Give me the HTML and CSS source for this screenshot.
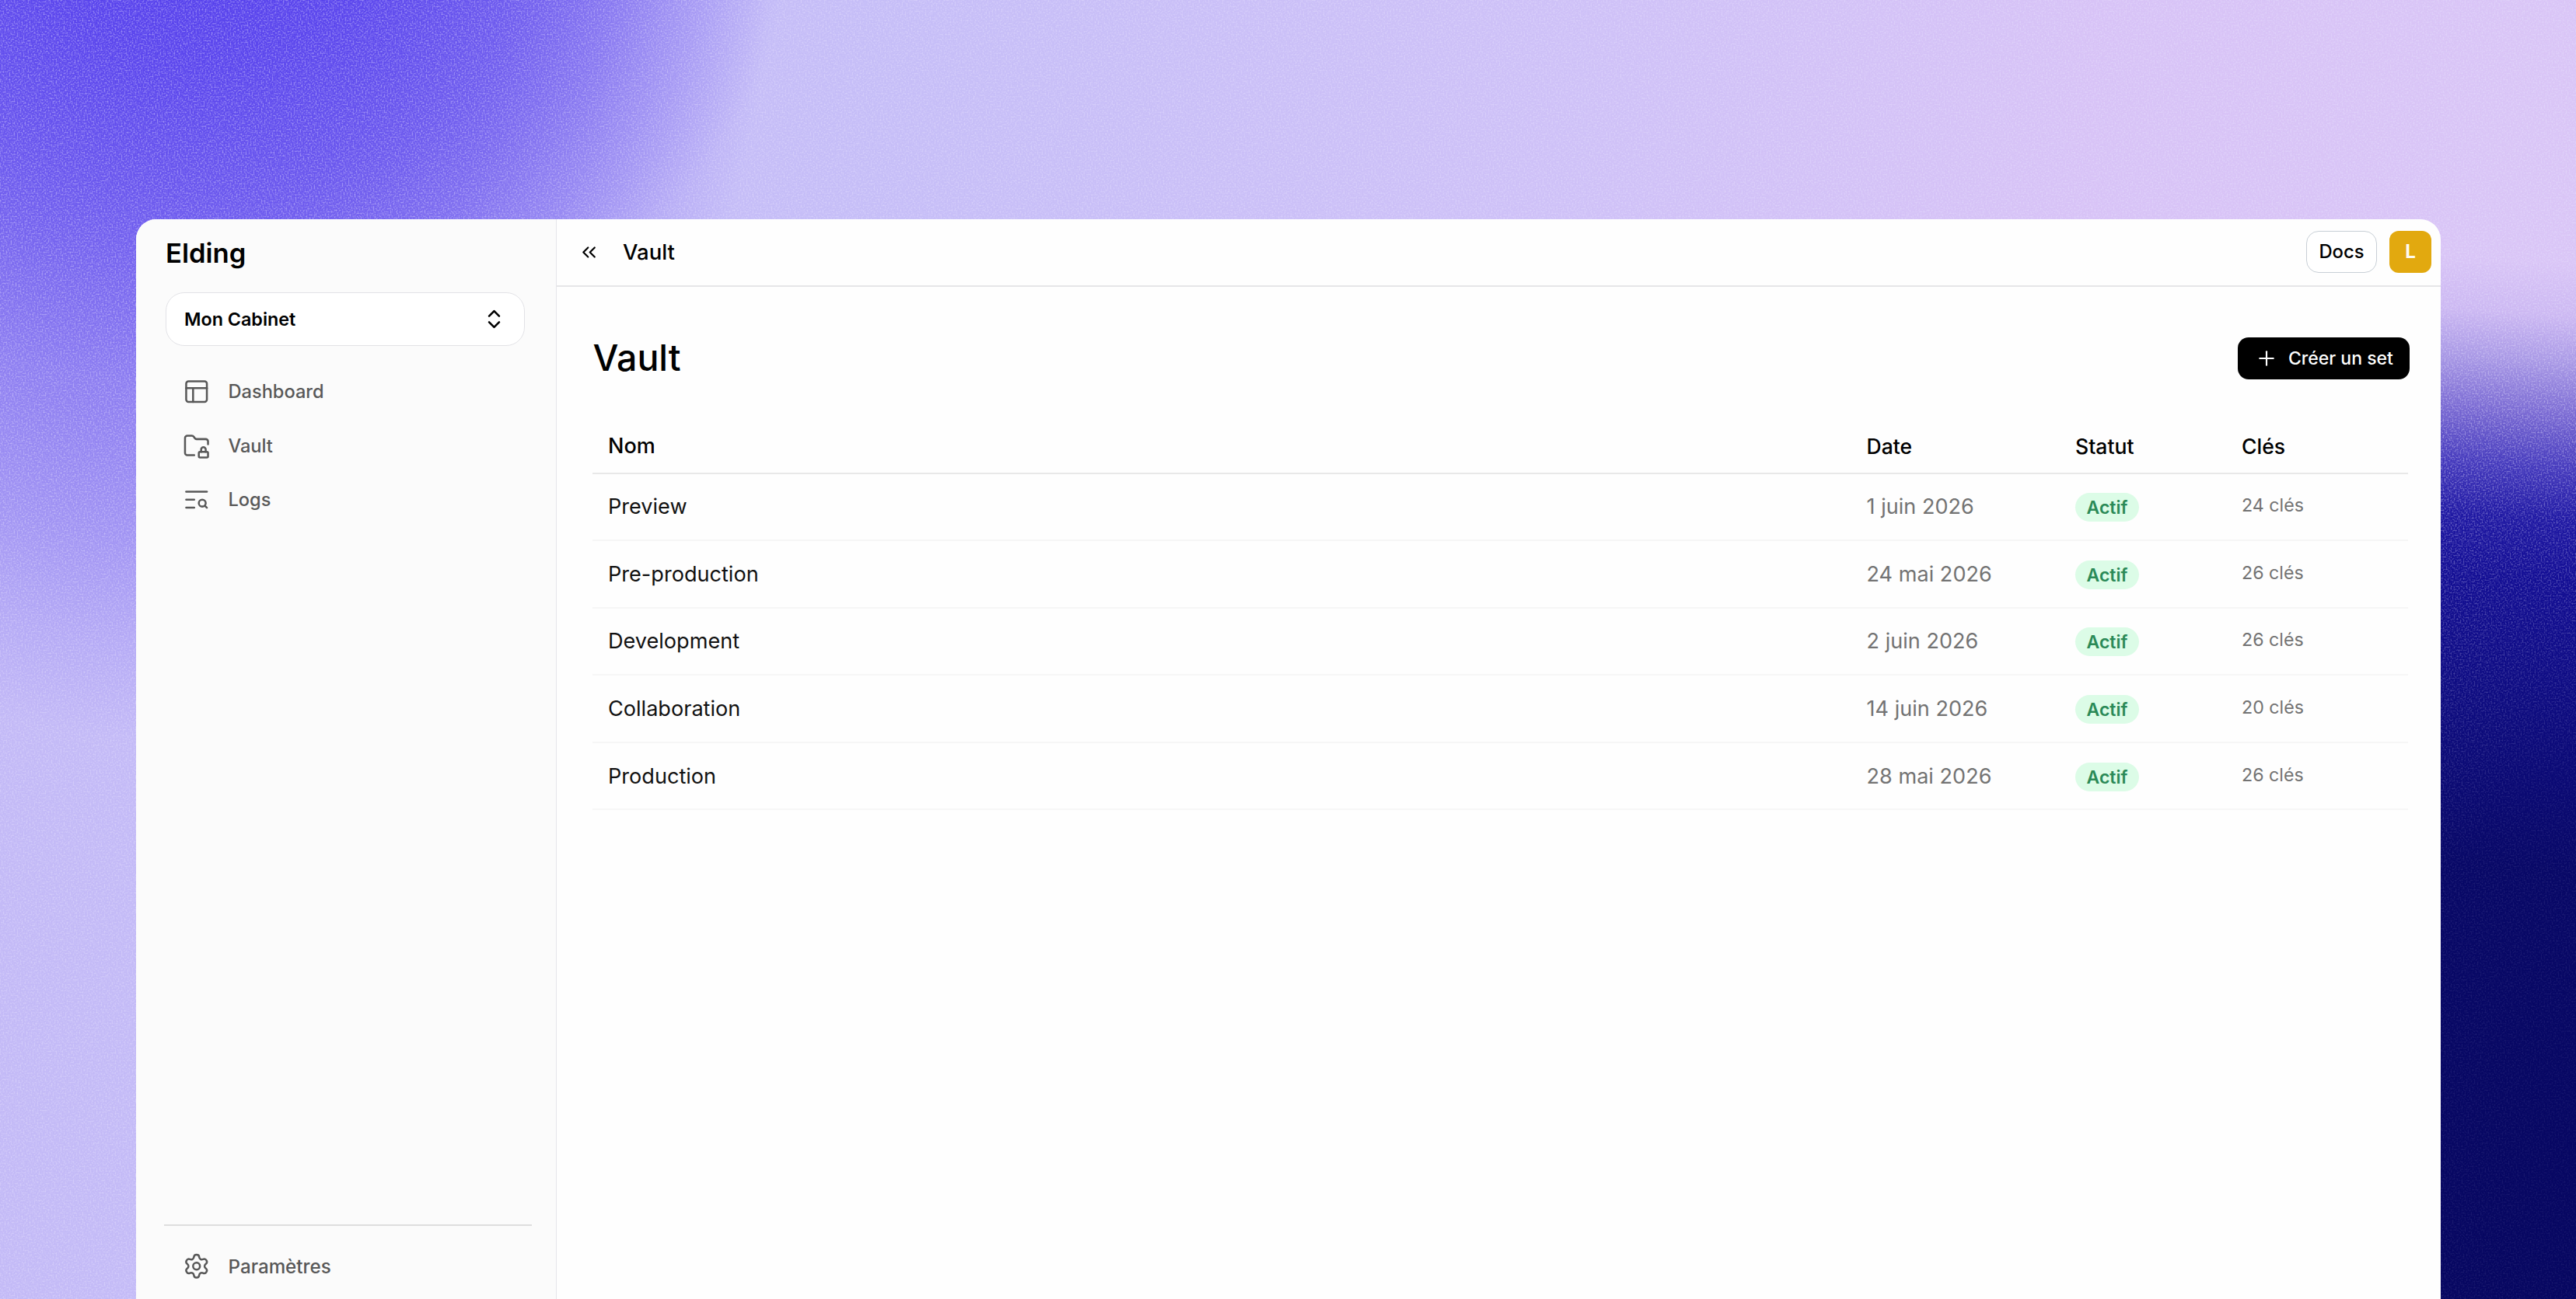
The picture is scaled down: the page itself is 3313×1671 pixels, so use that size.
FILE: index.html
```html
<!DOCTYPE html>
<html lang="fr">
<head>
<meta charset="utf-8">
<title>Elding – Vault</title>
<link rel="stylesheet" href="styles.css">
</head>
<body>
<svg class="grain" aria-hidden="true">
  <filter id="grain" x="0" y="0" width="100%" height="100%">
    <feTurbulence type="fractalNoise" baseFrequency="0.5" numOctaves="2" seed="4"/>
    <feColorMatrix values="0 0 0 0 0.82  0 0 0 0 0.78  0 0 0 0 1  2.8 0 0 0 -1.2"/>
  </filter>
  <rect width="100%" height="100%" filter="url(#grain)"/>
</svg>
<div class="window">
  <aside class="sidebar">
    <div class="brand">Elding</div>
    <button class="workspace">
      <span>Mon Cabinet</span>
      <svg class="icon icon-select" viewBox="0 0 24 24"><path d="m7 15 5 5 5-5"/><path d="m7 9 5-5 5 5"/></svg>
    </button>
    <nav class="nav">
      <a class="nav-item">
        <svg class="icon icon-nav" viewBox="0 0 24 24"><rect width="18" height="18" x="3" y="3" rx="2"/><path d="M3 9h18"/><path d="M9 21V9"/></svg>
        <span>Dashboard</span>
      </a>
      <a class="nav-item">
        <svg class="icon icon-nav" viewBox="0 0 24 24"><rect width="8" height="5" x="14" y="17" rx="1"/><path d="M10 20H4a2 2 0 0 1-2-2V5a2 2 0 0 1 2-2h3.9a2 2 0 0 1 1.69.9l.81 1.2a2 2 0 0 0 1.67.9H20a2 2 0 0 1 2 2v2.5"/><path d="M20 17v-2a2 2 0 1 0-4 0v2"/></svg>
        <span>Vault</span>
      </a>
      <a class="nav-item">
        <svg class="icon icon-nav" viewBox="0 0 24 24"><path d="M21 5H3"/><path d="M10 12H3"/><path d="M10 19H3"/><circle cx="17" cy="15" r="3"/><path d="m21 19-1.9-1.9"/></svg>
        <span>Logs</span>
      </a>
    </nav>
    <div class="sidebar-footer">
      <a class="nav-item">
        <svg class="icon icon-nav" viewBox="0 0 24 24"><path d="M9.671 4.136a2.34 2.34 0 0 1 4.659 0 2.34 2.34 0 0 0 3.319 1.915 2.34 2.34 0 0 1 2.33 4.033 2.34 2.34 0 0 0 0 3.831 2.34 2.34 0 0 1-2.33 4.033 2.34 2.34 0 0 0-3.319 1.915 2.34 2.34 0 0 1-4.659 0 2.34 2.34 0 0 0-3.32-1.915 2.34 2.34 0 0 1-2.33-4.033 2.34 2.34 0 0 0 0-3.831A2.34 2.34 0 0 1 6.35 6.051a2.34 2.34 0 0 0 3.319-1.915"/><circle cx="12" cy="12" r="3"/></svg>
        <span>Paramètres</span>
      </a>
    </div>
  </aside>
  <main class="main">
    <header class="topbar">
      <svg class="icon icon-collapse" viewBox="0 0 24 24"><path d="m11 17-5-5 5-5"/><path d="m18 17-5-5 5-5"/></svg>
      <span class="crumb">Vault</span>
      <button class="docs">Docs</button>
      <div class="avatar">L</div>
    </header>
    <section class="content">
      <div class="heading">
        <h1>Vault</h1>
        <button class="create">
          <svg class="icon icon-plus" viewBox="0 0 24 24"><path d="M5 12h14"/><path d="M12 5v14"/></svg>
          <span>Créer un set</span>
        </button>
      </div>
      <div class="table">
        <div class="row row-head"><span class="head-name">Nom</span><span>Date</span><span>Statut</span><span>Clés</span></div>
        <div class="row"><span class="name">Preview</span><span class="date">1 juin 2026</span><span class="badge">Actif</span><span class="keys">24 clés</span></div>
        <div class="row"><span class="name">Pre-production</span><span class="date">24 mai 2026</span><span class="badge">Actif</span><span class="keys">26 clés</span></div>
        <div class="row"><span class="name">Development</span><span class="date">2 juin 2026</span><span class="badge">Actif</span><span class="keys">26 clés</span></div>
        <div class="row"><span class="name">Collaboration</span><span class="date">14 juin 2026</span><span class="badge">Actif</span><span class="keys">20 clés</span></div>
        <div class="row"><span class="name">Production</span><span class="date">28 mai 2026</span><span class="badge">Actif</span><span class="keys">26 clés</span></div>
      </div>
    </section>
  </main>
</div>
</body>
</html>
```
FILE: styles.css
```css
* {
  box-sizing: border-box;
}

body {
  margin: 0;
  height: 1671px;
  padding: 282px 174px 0 175px;
  overflow: hidden;
  position: relative;
  font-family: Inter, "Liberation Sans", sans-serif;
  color: #000;
  background:
    radial-gradient(ellipse 760px 600px at 260px -100px, rgba(80, 58, 236, 0.95) 0%, rgba(80, 58, 236, 0.8) 30%, rgba(80, 58, 236, 0.5) 58%, rgba(80, 58, 236, 0.2) 80%, rgba(80, 58, 236, 0) 100%),
    radial-gradient(ellipse 800px 1010px at 190px -60px, #7e6df0 0%, #8373f0 40%, #8e7ff1 58%, #a093f3 74%, rgba(178, 167, 245, 0.85) 88%, rgba(198, 190, 247, 0) 100%),
    linear-gradient(184deg, rgba(218, 198, 246, 0) 20%, rgba(200, 180, 241, 0.8) 24%, #a898e5 27.5%, #7868d2 31.5%, #4338bc 35.5%, #1d16a2 39.5%, #110c93 44%, #0c0a7e 54%, #070766 66%, #060660 100%) right / 400px 100% no-repeat,
    linear-gradient(100deg, #c2b8f6 0%, #c5bdf7 32%, #cdc0f7 55%, #d7c2f6 75%, #dac6f6 100%);
}

button {
  font: inherit;
  color: inherit;
  margin: 0;
}

.grain {
  position: absolute;
  inset: 0;
  width: 100%;
  height: 100%;
  opacity: 0.42;
  mask-image: radial-gradient(ellipse 500px 1000px at 3313px 1500px, rgba(0, 0, 0, 0.15) 0%, rgba(0, 0, 0, 0.25) 50%, #000 95%);
}

.icon {
  flex: none;
  fill: none;
  stroke: currentColor;
  stroke-linecap: round;
  stroke-linejoin: round;
}

.window {
  position: relative;
  display: flex;
  height: 1389px;
  border-radius: 26px 26px 0 0;
  overflow: hidden;
  background: #fefefe;
}

/* Sidebar */

.sidebar {
  flex: none;
  width: 541px;
  display: flex;
  flex-direction: column;
  border-right: 1.5px solid #e6e6ea;
  background: #fbfbfb;
}

.brand {
  height: 94px;
  padding: 0 0 7px 38px;
  line-height: 87px;
  font-size: 34.6px;
  font-weight: 600;
}

.workspace {
  width: 462px;
  height: 69px;
  margin-left: 38px;
  padding: 0 31px 0 23px;
  display: flex;
  align-items: center;
  justify-content: space-between;
  border: 1.5px solid #e2e2e6;
  border-radius: 24px;
  background: #fff;
  font-size: 23.3px;
  font-weight: 600;
}

.icon-select {
  width: 31px;
  height: 31px;
  margin-right: -8px;
  stroke-width: 2;
}

.nav {
  padding-top: 24px;
}

.nav-item {
  height: 69.6px;
  padding-left: 60px;
  display: flex;
  align-items: center;
  gap: 23px;
  color: #585858;
  font-size: 23.6px;
  font-weight: 500;
}

.icon-nav {
  width: 35.5px;
  height: 35.5px;
  stroke-width: 1.7;
}

.sidebar-footer {
  width: 473px;
  margin: auto 0 7px 36px;
  padding-top: 17px;
  border-top: 2px solid #dedede;
}

.sidebar-footer .nav-item {
  padding-left: 24px;
  font-size: 24.2px;
}

/* Main area */

.main {
  flex: 1;
  min-width: 0;
  display: flex;
  flex-direction: column;
}

.topbar {
  height: 87px;
  padding: 0 12px 2px 27px;
  display: flex;
  align-items: center;
  border-bottom: 2px solid #e6e6e8;
}

.icon-collapse {
  width: 29px;
  height: 29px;
  margin-top: 2px;
  stroke-width: 1.8;
}

.crumb {
  margin-left: 29px;
  padding-top: 1px;
  font-size: 27.5px;
  font-weight: 500;
}

.docs {
  width: 91px;
  height: 54px;
  margin-left: auto;
  padding: 0;
  border: 1.5px solid #c8cfd6;
  border-radius: 16px;
  background: #fff;
  font-size: 23.8px;
  font-weight: 500;
}

.avatar {
  width: 54px;
  height: 54px;
  margin-left: 16px;
  display: grid;
  place-items: center;
  border-radius: 12px;
  background: #e2a90f;
  color: #fffaf0;
  font-size: 24px;
  font-weight: 700;
}

.content {
  padding: 65px 40px 0 46px;
}

.heading {
  height: 54px;
  display: flex;
  align-items: center;
  justify-content: space-between;
}

h1 {
  margin: 0;
  padding: 0 0 2px 0.5px;
  font-size: 46.5px;
  font-weight: 500;
}

.create {
  width: 221px;
  height: 54px;
  padding: 0 0 0 22px;
  display: flex;
  align-items: center;
  gap: 13px;
  border: 0;
  border-radius: 14px;
  background: #000;
  color: #fff;
  font-size: 23px;
  font-weight: 500;
  white-space: nowrap;
}

.icon-plus {
  width: 30px;
  height: 30px;
  stroke-width: 1.7;
}

.table {
  width: 2335px;
  margin-top: 52px;
}

.row {
  height: 86.6px;
  display: grid;
  grid-template-columns: 1618.5px 268.5px 214px 1fr;
  align-items: center;
  padding-left: 20px;
  border-bottom: 2px solid #f6f6f6;
  font-size: 27.1px;
}

.row-head {
  height: 69.5px;
  border-bottom: 2px solid #e8e8e8;
  font-size: 26.6px;
  font-weight: 500;
}

.head-name {
  font-size: 27px;
}

.name {
  color: #111;
}

.date {
  color: #737373;
}

.badge {
  display: flex;
  width: 82px;
  height: 37px;
  margin-top: 2px;
  padding-top: 1px;
  align-items: center;
  justify-content: center;
  border-radius: 19px;
  background: #dcfce7;
  color: #2b8a57;
  font-size: 23px;
  font-weight: 600;
}

.keys {
  padding-bottom: 3px;
  color: #737373;
  font-size: 23.2px;
}
```
